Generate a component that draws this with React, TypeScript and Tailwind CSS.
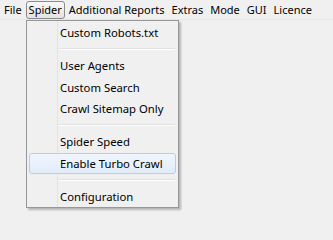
const topMenus = ["File", "Spider", "Additional Reports", "Extras", "Mode", "GUI", "Licence"];

type Entry = { label: string; active?: boolean } | "sep";

const spiderMenu: Entry[] = [
  { label: "Custom Robots.txt" },
  "sep",
  { label: "User Agents" },
  { label: "Custom Search" },
  { label: "Crawl Sitemap Only" },
  "sep",
  { label: "Spider Speed" },
  { label: "Enable Turbo Crawl", active: true },
  "sep",
  { label: "Configuration" },
];

function MenuBar() {
  return (
    <div className="flex h-[20px] items-center gap-[1px] whitespace-nowrap border-b border-[#e6e6e6] pl-[1px] text-[11px]">
      {topMenus.map((m) => (
        <div
          key={m}
          className={
            m === "Spider"
              ? "flex h-[18px] items-center rounded-[3px] border border-[#8a8a8a] bg-gradient-to-b from-[#f8f8f8] to-[#e3e3e3] px-[2px]"
              : "flex h-[18px] items-center px-[3px]"
          }
        >
          {m}
        </div>
      ))}
    </div>
  );
}

function Dropdown() {
  return (
    <div className="absolute left-[26px] top-[20px] w-[153px] border border-[#979797] bg-[#f0f0f0] pt-[1px] shadow-[2px_2px_2px_rgba(0,0,0,0.25)]">
      {/* gutter */}
      <div className="absolute bottom-0 left-[30px] top-0 w-[2px] border-l border-[#e2e3e3] border-r-white" />
      {spiderMenu.map((e, i) =>
        e === "sep" ? (
          <div key={i} className="flex h-[11.5px] items-center pl-[32px] pr-[3px]">
            <div className="h-[2px] w-full border-t border-[#e0e0e0] bg-white" />
          </div>
        ) : (
          <div key={i} className="relative h-[21.5px] px-[2px]">
            {e.active && (
              <div className="absolute inset-x-[2px] inset-y-0 rounded-[3px] border border-[#aecff7] bg-gradient-to-b from-[#f1f6fd] to-[#e1ecfa]" />
            )}
            <div className="relative flex h-full items-center whitespace-nowrap pl-[31px]">{e.label}</div>
          </div>
        )
      )}
    </div>
  );
}

export default function App() {
  return (
    <div className="relative h-[209px] min-h-screen w-full overflow-hidden bg-[#f0f0f0] text-[11.3px] leading-none text-black [font-family:'Noto_Sans',sans-serif]">
      <MenuBar />
      <Dropdown />
    </div>
  );
}
